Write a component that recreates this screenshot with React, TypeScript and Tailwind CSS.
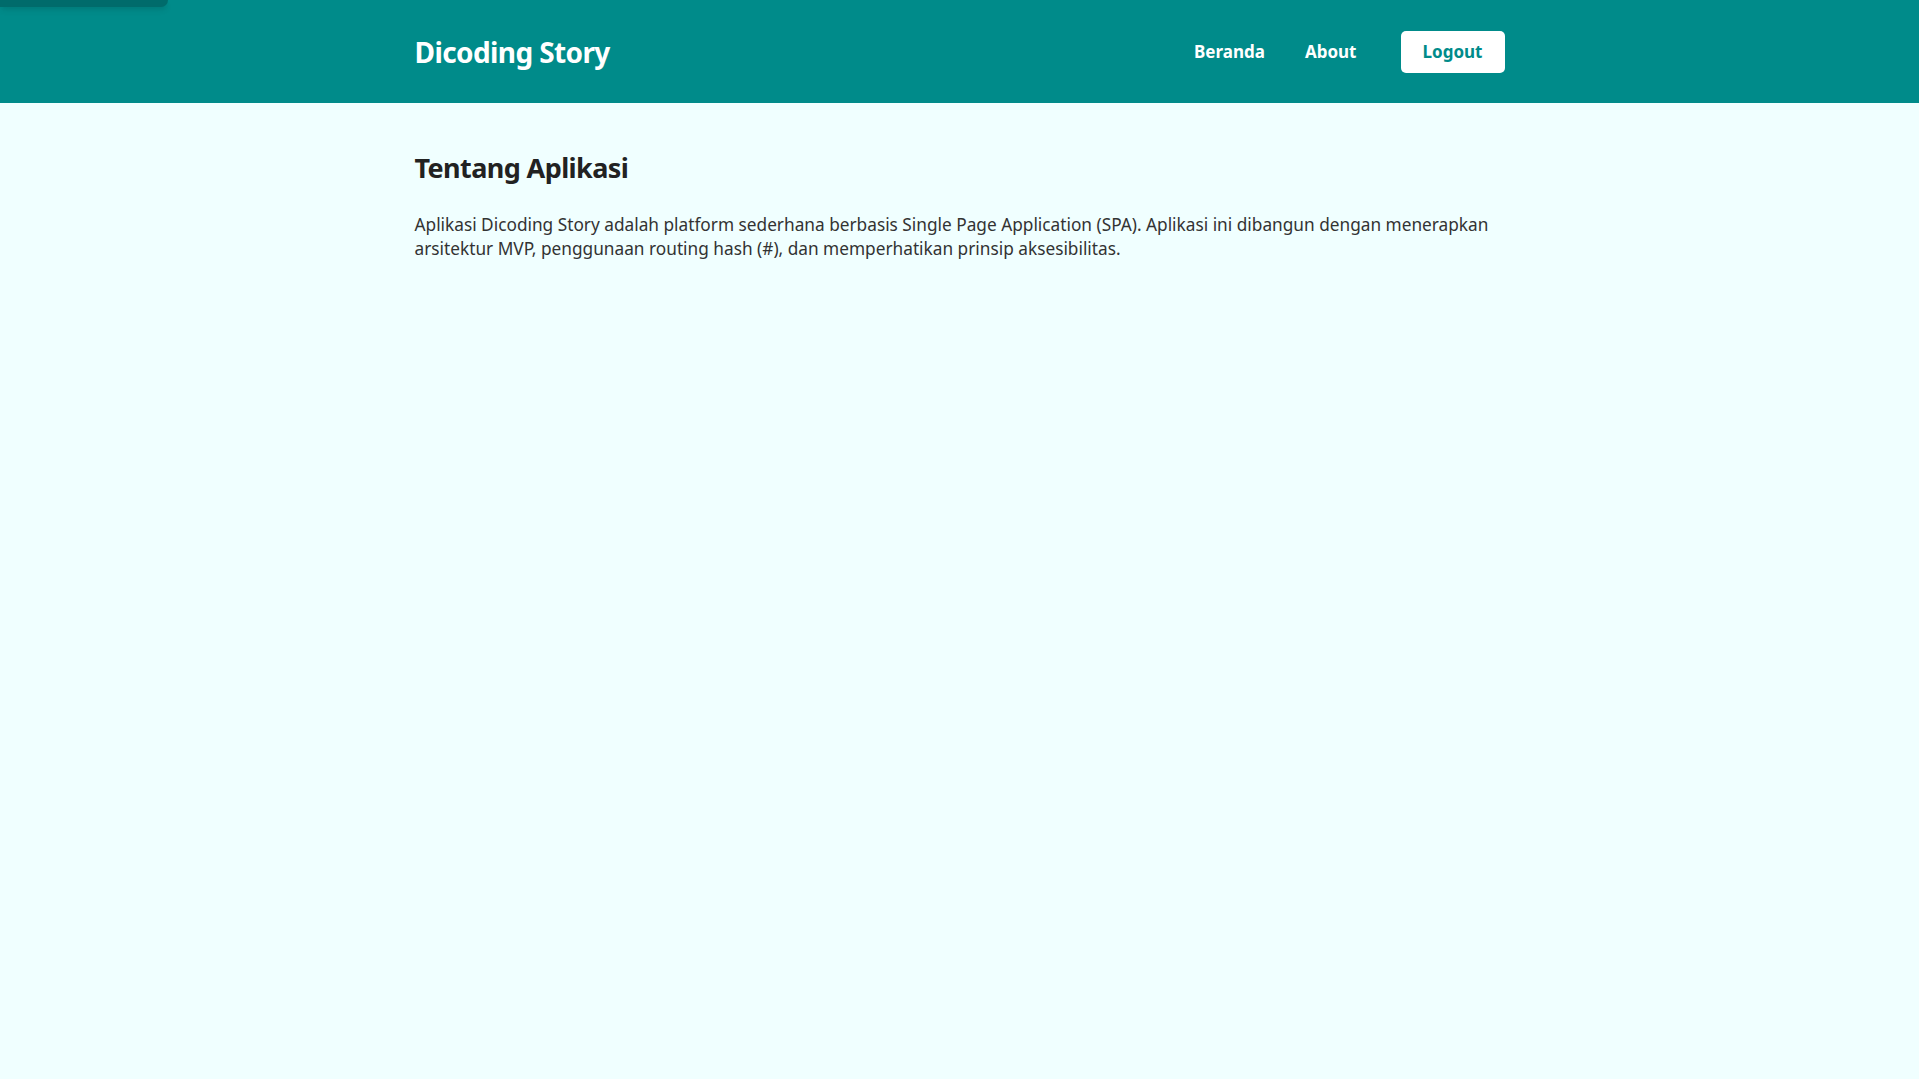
export default function App() {
  return (
    <div
      className="min-h-screen bg-[#f0ffff] text-[#222]"
      style={{ fontFamily: '"Noto Sans", "Open Sans", sans-serif' }}
    >
      <a
        href="#main"
        className="absolute left-0 top-0 h-[7px] w-[168px] rounded-br-lg bg-[#006b6b] shadow-md"
        aria-label="Skip to content"
      />
      <header className="bg-[#008b8a]">
        <div className="mx-auto flex h-[103px] w-[1090px] items-center justify-between">
          <h1 className="text-[28px] font-bold tracking-[-0.6px] text-white">Dicoding Story</h1>
          <nav className="flex items-center">
            <a href="#/" className="text-[17px] font-bold text-white">Beranda</a>
            <a href="#/about" className="ml-[40px] text-[17px] font-bold text-white">About</a>
            <button className="ml-[44px] h-[42px] w-[104px] rounded-[5px] bg-white text-[17px] font-bold text-[#008b8a]">
              Logout
            </button>
          </nav>
        </div>
      </header>
      <main id="main" className="mx-auto w-[1090px] pt-[45px]">
        <h2 className="text-[27px] font-bold tracking-[-0.6px] text-[#222]">Tentang Aplikasi</h2>
        <p className="mt-[24px] text-[17.25px] leading-[24.5px] text-[#333]">
          Aplikasi Dicoding Story adalah platform sederhana berbasis Single Page Application (SPA). Aplikasi ini dibangun dengan menerapkan arsitektur MVP, penggunaan routing hash (#), dan memperhatikan prinsip aksesibilitas.
        </p>
      </main>
    </div>
  );
}
